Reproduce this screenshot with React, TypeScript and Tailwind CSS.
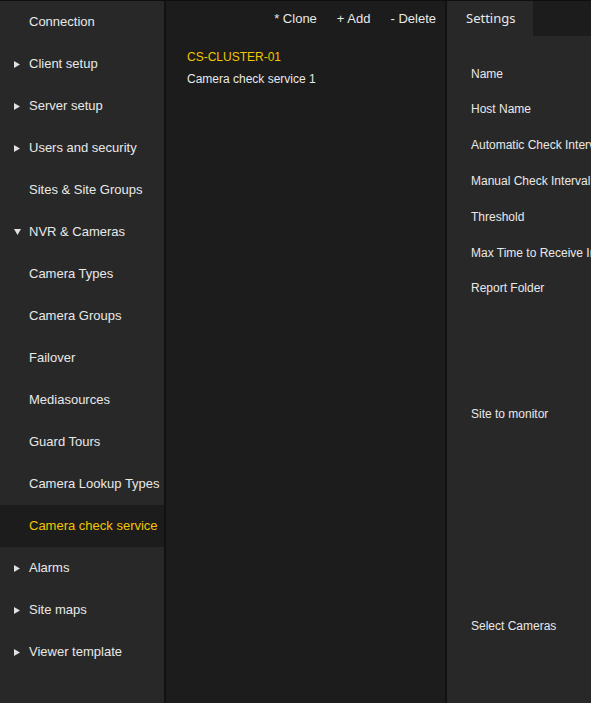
import React from 'react';

type NavItem = { label: string; arrow?: 'right' | 'down'; active?: boolean };

const navItems: NavItem[] = [
  { label: 'Connection' },
  { label: 'Client setup', arrow: 'right' },
  { label: 'Server setup', arrow: 'right' },
  { label: 'Users and security', arrow: 'right' },
  { label: 'Sites & Site Groups' },
  { label: 'NVR & Cameras', arrow: 'down' },
  { label: 'Camera Types' },
  { label: 'Camera Groups' },
  { label: 'Failover' },
  { label: 'Mediasources' },
  { label: 'Guard Tours' },
  { label: 'Camera Lookup Types' },
  { label: 'Camera check service', active: true },
  { label: 'Alarms', arrow: 'right' },
  { label: 'Site maps', arrow: 'right' },
  { label: 'Viewer template', arrow: 'right' },
];

const fields: { label: string; h: string }[] = [
  { label: 'Name', h: 'h-[35px]' },
  { label: 'Host Name', h: 'h-[36px]' },
  { label: 'Automatic Check Interval', h: 'h-[36px]' },
  { label: 'Manual Check Interval', h: 'h-[36px]' },
  { label: 'Threshold', h: 'h-[36px]' },
  { label: 'Max Time to Receive Images', h: 'h-[35px]' },
  { label: 'Report Folder', h: 'h-[36px]' },
  { label: 'Site to monitor', h: 'h-[216px]' },
  { label: 'Select Cameras', h: 'h-[208px]' },
];

function Arrow({ dir }: { dir?: 'right' | 'down' }) {
  if (!dir) return <span className="w-[15px]" />;
  return (
    <span className="w-[15px] flex items-center">
      {dir === 'right' ? (
        <svg width="6" height="7" viewBox="0 0 6 7">
          <path d="M0 0 L6 3.5 L0 7 Z" fill="#e0e0e0" />
        </svg>
      ) : (
        <svg width="7" height="6" viewBox="0 0 7 6">
          <path d="M0 0 L7 0 L3.5 6 Z" fill="#e0e0e0" />
        </svg>
      )}
    </span>
  );
}

export default function App() {
  return (
    <div
      className="flex w-[591px] h-[703px] overflow-hidden bg-[#1c1c1c] border-t border-[#0e0e0e] text-[13px] text-[#e8e8e8]"
      style={{ fontFamily: '"Liberation Sans", Arial, sans-serif' }}
    >
      {/* sidebar */}
      <div className="w-[164px] shrink-0 bg-[#282828] flex flex-col">
        {navItems.map((item) => (
          <div
            key={item.label}
            className={`h-[42px] flex items-center pl-[14px] whitespace-nowrap ${
              item.active ? 'bg-[#1c1c1c] text-[#f2c600]' : ''
            }`}
          >
            <Arrow dir={item.arrow} />
            <span>{item.label}</span>
          </div>
        ))}
      </div>
      <div className="w-[2px] shrink-0 bg-[#121212]" />

      {/* list panel */}
      <div className="w-[279px] shrink-0 bg-[#1c1c1c] flex flex-col">
        <div className="h-[35px] flex items-center justify-end gap-[20px] pr-[9px]">
          <span>* Clone</span>
          <span>+ Add</span>
          <span>- Delete</span>
        </div>
        <div className="pt-[10px] pl-[21px] text-[12px]">
          <div className="h-[22px] flex items-center text-[#f2c600]">CS-CLUSTER-01</div>
          <div className="h-[22px] flex items-center">Camera check service 1</div>
        </div>
      </div>
      <div className="w-[2px] shrink-0 bg-[#121212]" />

      {/* settings panel */}
      <div className="flex-1 min-w-0 flex flex-col">
        <div className="h-[35px] flex shrink-0">
          <div
            className="w-[86px] bg-[#282828] flex items-center pl-[19px] text-[13px]"
            style={{ fontFamily: '"Noto Sans", "Open Sans", sans-serif' }}
          >
            Settings
          </div>
          <div className="flex-1 bg-[#1c1c1c]" />
        </div>
        <div className="flex-1 bg-[#282828] pt-[20px] pl-[24px] text-[12px] whitespace-nowrap">
          {fields.map((f) => (
            <div key={f.label} className={`${f.h} flex items-center`}>
              {f.label}
            </div>
          ))}
        </div>
      </div>
    </div>
  );
}
